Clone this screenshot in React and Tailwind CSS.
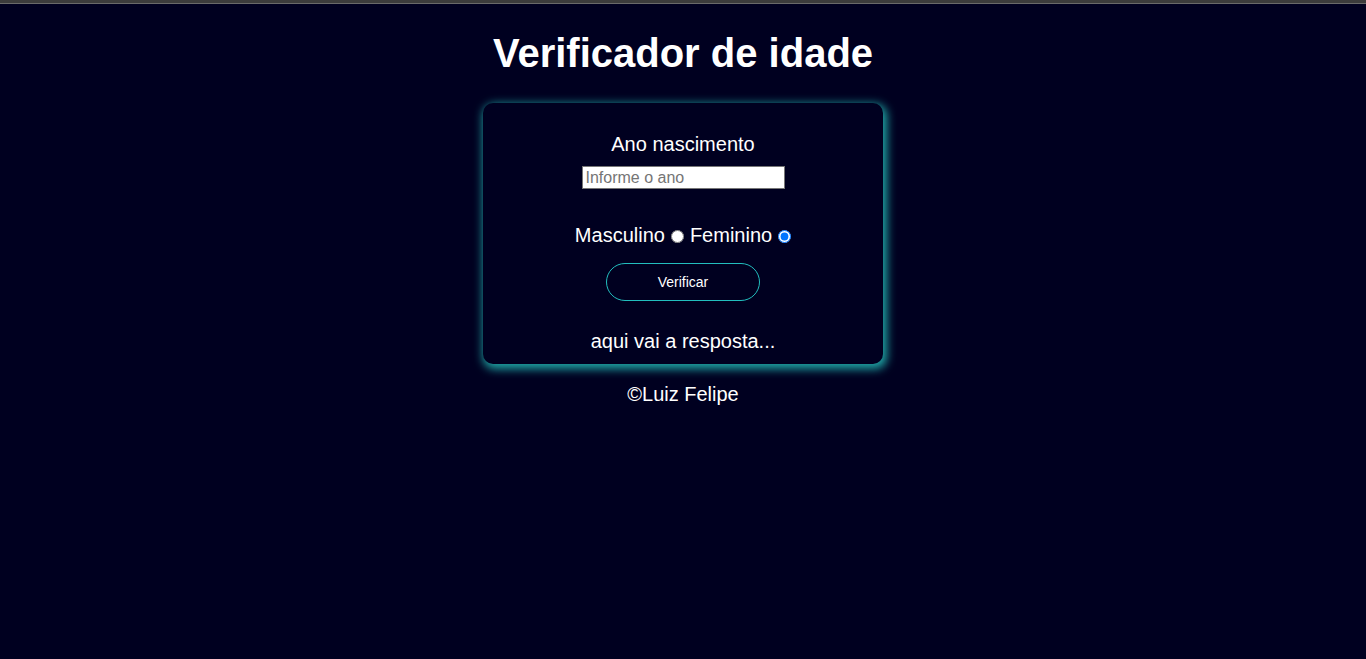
export default function App() {
  return (
    <div className="min-h-[659px] bg-[#000020] text-white font-['Liberation_Sans',Arial,sans-serif]">
      <div className="h-[4px] bg-[#3c3c3c] border-b border-[#6a6a6a]" />

      <h1 className="pt-[26px] text-center text-[40px] font-bold leading-[46px]">
        Verificador de idade
      </h1>

      <div className="mx-auto mt-[27px] flex w-[400px] flex-col items-center rounded-[10px] bg-[#000020] pt-[30px] pb-[11px] shadow-[2px_3px_10px_2px_#1fa5a5]">
        <p className="text-[20px] leading-[23px]">Ano nascimento</p>

        <input
          type="text"
          placeholder="Informe o ano"
          className="mt-[10px] h-[23px] w-[203px] border border-[#767676] bg-white px-[3px] text-[16px] text-black placeholder:text-[#757575] outline-none"
        />

        <div className="mt-[35px] flex h-[23px] items-center text-[20px] leading-[23px]">
          <label htmlFor="masc">Masculino</label>
          <input
            id="masc"
            type="radio"
            name="sexo"
            className="ml-[6px] mr-[6px] h-[13px] w-[13px] mt-[2px]"
          />
          <label htmlFor="fem">Feminino</label>
          <input
            id="fem"
            type="radio"
            name="sexo"
            defaultChecked
            className="ml-[6px] h-[13px] w-[13px] mt-[2px]"
          />
        </div>

        <button
          type="button"
          className="mt-[16px] h-[38px] w-[154px] rounded-full border border-[#22bebe] bg-transparent text-[14px] text-white"
        >
          Verificar
        </button>

        <p className="mt-[29px] text-[20px] leading-[23px]">aqui vai a resposta...</p>
      </div>

      <p className="mt-[19px] text-center text-[20px] leading-[23px]">©Luiz Felipe</p>
    </div>
  );
}
